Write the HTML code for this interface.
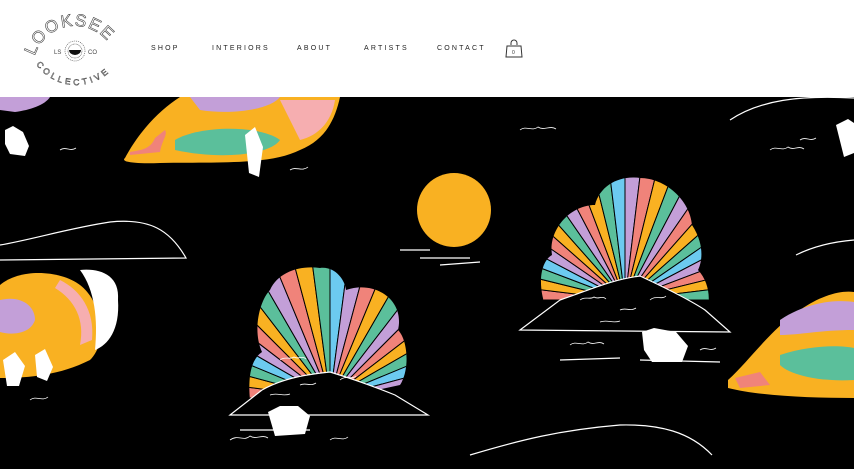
<!DOCTYPE html>
<html><head><meta charset="utf-8"><style>
html,body{margin:0;padding:0;width:854px;height:469px;overflow:hidden;background:#000;font-family:"Liberation Sans",sans-serif}
.hdr{position:absolute;left:0;top:0;width:854px;height:97px;background:#fff}
.nav{position:absolute;top:45px;font-size:7px;letter-spacing:2.2px;color:#222}
</style></head><body>
<div class="hdr">
<svg width="140" height="97" style="position:absolute;left:0;top:0">
<defs>
<path id="tp" d="M33,68 A42,42 0 0 1 117,68"/>
<path id="bp" d="M34,61 A49,49 0 0 0 120,58"/>
</defs>
<text font-size="17" fill="none" stroke="#444" stroke-width="0.6" letter-spacing="1.5" font-family="Liberation Sans"><textPath href="#tp" startOffset="12">LOOKSEE</textPath></text>
<text font-size="8.5" fill="none" stroke="#444" stroke-width="0.5" letter-spacing="3.2" font-family="Liberation Sans"><textPath href="#bp" startOffset="4">COLLECTIVE</textPath></text>
<g stroke="#444" stroke-width="0.6">
<circle cx="75" cy="51" r="10" fill="none" stroke-dasharray="1 1"/>
<circle cx="75" cy="51" r="7" fill="none" stroke-dasharray="0.8 0.6"/>
</g>
<path d="M69,50 h12 a6,5 0 0 1 -12,0z" fill="#111"/>
<text x="54" y="54" font-size="6" fill="#444">LS</text>
<text x="88" y="54" font-size="6" fill="#444">CO</text>
</svg>
<div class="nav" style="left:151px">SHOP</div>
<div class="nav" style="left:212px">INTERIORS</div>
<div class="nav" style="left:297px">ABOUT</div>
<div class="nav" style="left:364px">ARTISTS</div>
<div class="nav" style="left:437px">CONTACT</div>
<svg width="20" height="22" style="position:absolute;left:504px;top:38px">
<path d="M7,7 v-2 a3,3 0 0 1 6,0 v2" fill="none" stroke="#333" stroke-width="1"/>
<path d="M3,8 h14 l1,11 h-16z" fill="none" stroke="#333" stroke-width="1"/>
<text x="8" y="16" font-size="5" fill="#333">0</text>
</svg>
</div>
<svg width="854" height="372" viewBox="0 97 854 372" style="position:absolute;left:0;top:97px">
<defs>
<clipPath id="c1"><path d="M250,400 C248,380 250,360 262,352 C252,330 260,300 270,290 C278,272 300,265 320,268 C335,266 345,280 346,290 C375,280 405,300 398,330 C408,340 410,370 400,385 L330,400Z"/></clipPath>
<clipPath id="c2"><path d="M545,305 C538,285 540,262 552,255 C548,230 570,205 595,205 C600,185 620,175 640,178 C665,178 690,200 692,225 C705,245 702,262 698,270 C712,285 712,310 700,322 L600,320Z"/></clipPath>
</defs>
<g id="fans"></g>
<circle cx="454" cy="210" r="37" fill="#f9b122"/>
<g stroke="#fff" stroke-width="1.2" fill="none">
<path d="M230,415 L262,390 C280,380 300,375 330,372 C350,378 370,385 395,395 L428,415 Z" fill="#000"/>
<path d="M520,330 L560,300 C590,290 610,280 640,276 C670,290 690,300 705,310 L730,332 Z" fill="#000"/>
<path d="M0,245 C30,240 70,228 110,222 C150,218 170,230 186,258 L0,260"/>
<path d="M796,255 C810,248 830,242 854,240"/>
<path d="M470,455 C520,440 560,430 620,425 C660,424 690,432 712,455"/>
<path d="M730,120 C760,100 800,95 854,98"/>
<path d="M400,250 L430,250 M420,258 L470,258 M440,265 L480,262"/>
<path d="M240,430 L310,430 M560,360 L620,358 M640,360 L720,362"/>
</g>
<g stroke="#fff" stroke-width="0.8" fill="none">
<path d="M280,360 c5,-4 10,0 14,-3 c4,3 8,-2 12,2 M300,385 c6,-3 10,2 16,-2 M340,380 c5,-5 12,0 16,-4 M270,395 c8,-3 12,2 20,-1"/>
<path d="M580,300 c5,-4 10,0 14,-3 c4,3 8,-2 12,2 M620,310 c6,-3 10,2 16,-2 M650,300 c5,-5 12,0 16,-4 M600,322 c8,-3 12,2 20,-1"/>
<path d="M230,440 c8,-6 14,2 20,-4 c6,4 12,-2 18,2 M330,440 c6,-5 12,2 18,-3 M570,345 c6,-5 12,2 18,-3 c6,4 10,-2 16,2 M700,350 c6,-4 10,2 16,-2"/>
<path d="M770,150 c6,-5 12,2 18,-3 c6,4 10,-2 16,2 M800,140 c6,-4 10,2 16,-2 M520,130 c6,-5 12,2 18,-3 c6,4 12,-2 18,2 M30,400 c6,-5 12,2 18,-3 M60,150 c6,-4 10,2 16,-2 M290,170 c6,-4 12,2 18,-3"/>
</g>
<path d="M125,158 C140,130 160,110 180,97 L340,97 C335,120 325,140 300,150 C270,165 220,162 160,163 C135,164 120,162 125,158Z" fill="#f9b122"/>
<path d="M190,97 L280,97 C270,110 230,115 200,110Z" fill="#c39fd8"/>
<path d="M175,140 C200,125 260,125 280,140 C270,155 220,160 175,150Z" fill="#5bbf9b"/>
<path d="M280,100 L335,100 C332,120 320,135 300,140Z" fill="#f6aeb0"/>
<path d="M130,155 L160,152 C162,140 168,135 165,130 L155,138 C150,150 140,150 130,152Z" fill="#f0837a"/>
<path d="M0,285 C20,268 60,270 80,285 C100,300 110,340 90,360 C60,375 30,378 0,378Z" fill="#f9b122"/>
<path d="M0,300 C20,295 35,305 35,320 C30,335 10,335 0,332Z" fill="#c39fd8"/>
<path d="M60,280 C80,290 95,310 92,340 L80,345 C85,320 75,300 55,288Z" fill="#f6aeb0"/>
<path d="M80,270 C100,268 120,275 118,300 C120,330 108,345 95,350 C98,320 95,290 80,270Z" fill="#fff"/>
<path d="M728,380 C750,360 770,330 800,310 C820,296 840,290 854,292 L854,398 C810,398 760,396 728,388Z" fill="#f9b122"/>
<path d="M780,320 C810,300 840,300 854,302 L854,330 C820,330 800,335 780,335Z" fill="#c39fd8"/>
<path d="M780,355 C810,345 840,345 854,348 L854,380 C820,382 790,375 780,365Z" fill="#5bbf9b"/>
<path d="M735,378 L760,372 L770,385 L740,388Z" fill="#f0837a"/>
<path d="M0,97 L50,97 C45,105 30,110 15,112 L0,110Z" fill="#c39fd8"/>
<g fill="#fff">
<path d="M5,130 l8,-4 l10,6 l6,14 l-4,10 l-15,-2 l-5,-10z"/>
<path d="M268,412 l12,-6 l18,0 l12,10 l-5,18 l-30,2z"/>
<path d="M642,332 l12,-4 l22,4 l12,14 l-6,16 l-30,0 l-8,-12z"/>
<path d="M245,135 l10,-8 l8,20 l-4,30 l-10,-4z"/>
<path d="M3,360 l12,-8 l10,14 l-6,20 l-12,0z M35,355 l10,-6 l8,18 l-6,14 l-10,-4z"/>
<path d="M836,125 l12,-6 l6,4 l0,30 l-10,4z"/>
</g>
</svg>
<script>
var cols=["#f0837a","#f9b122","#5bbf9b","#6ccaf0","#c39fd8","#f0837a","#f9b122","#5bbf9b","#c39fd8"];
function fan(cx,cy,clip,n){var s='<g clip-path="url(#'+clip+')">';for(var i=0;i<n;i++){var a1=Math.PI+i*Math.PI/n,a2=Math.PI+(i+1)*Math.PI/n;var r=200;s+='<path d="M'+cx+','+cy+' L'+(cx+r*Math.cos(a1))+','+(cy+r*Math.sin(a1))+' L'+(cx+r*Math.cos(a2))+','+(cy+r*Math.sin(a2))+'Z" fill="'+cols[i%cols.length]+'" stroke="#000" stroke-width="1"/>';}return s+'</g>';}
document.getElementById('fans').innerHTML=fan(330,398,'c1',24)+fan(625,300,'c2',26);
</script>
</body></html>
